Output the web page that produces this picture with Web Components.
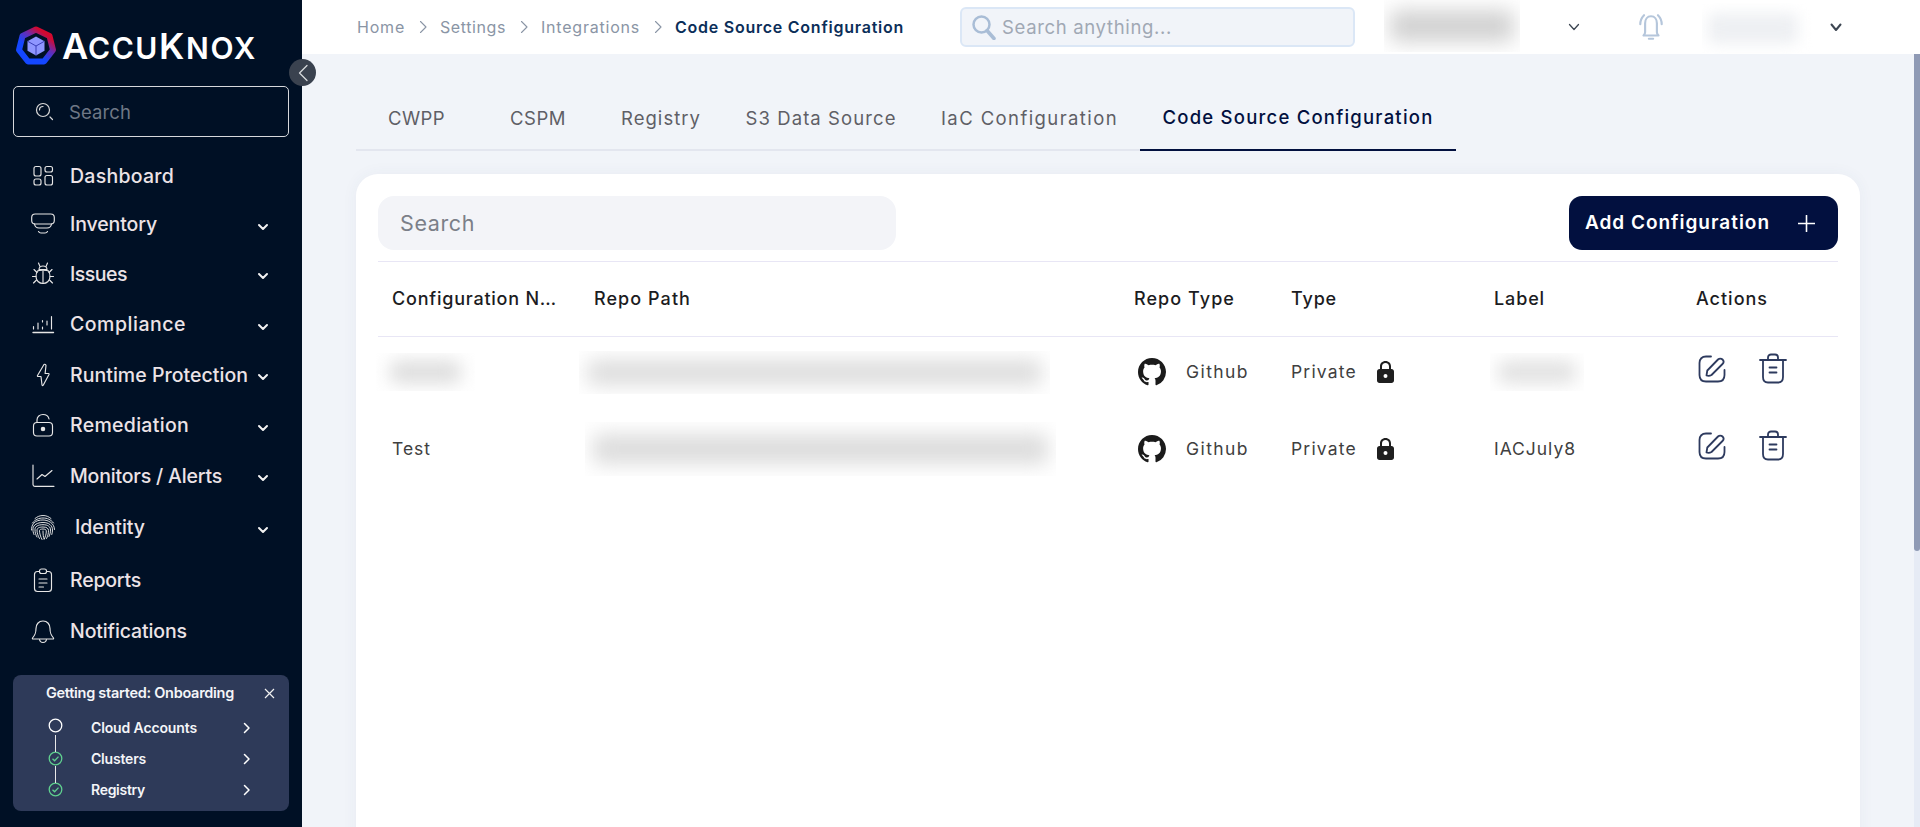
<!DOCTYPE html>
<html lang="en"><head><meta charset="utf-8"><title>Code Source Configuration</title>
<style>
html,body{margin:0;height:827px;overflow:hidden;background:#f1f4f9;font-family:Inter,"Liberation Sans",sans-serif}
</style></head><body>
<app-shell></app-shell>
<script>
const css=s=>`<style>${s}</style>`;
function def(name,render,attrs){customElements.define(name,class extends HTMLElement{
  connectedCallback(){ if(this.shadowRoot) return; this.attachShadow({mode:'open'}).innerHTML=render(this); }
});}
/* text whose tracking is tuned to a width */
customElements.define('fit-t',class extends HTMLElement{
  connectedCallback(){
    if(!this.shadowRoot){this.attachShadow({mode:'open'}).innerHTML='<style>:host{display:inline-block;white-space:nowrap}</style><slot></slot>';}
    queueMicrotask(()=>this.fit());
  }
  fit(){const w=+this.getAttribute('w');if(!w)return;
    this.style.letterSpacing='0px';
    const m=this.getBoundingClientRect().width;const n=this.textContent.length;
    if(m>0)this.style.letterSpacing=((w-m)/n).toFixed(3)+'px';}
});
const svg=(w,h,vb,body,extra='')=>`<svg width="${w}" height="${h}" viewBox="${vb}" fill="none" stroke="currentColor" stroke-linecap="round" stroke-linejoin="round" ${extra}>${body}</svg>`;
const ICONS={
dash:svg(24,24,'0 0 24 24','<rect x="3" y="2.500" width="7" height="9.500" rx="2"/><rect x="14" y="2.500" width="7.500" height="5.500" rx="2"/><rect x="3" y="15" width="7" height="6" rx="2"/><rect x="14" y="11.500" width="7.500" height="9.500" rx="2"/>'),
inv:svg(24,24,'0 0 24 24','<rect x="0.700" y="2" width="22.600" height="10" rx="3.500"/><path d="M3.500 12c.5 3 2.500 4 4.500 4h8c2 0 4-1 4.500-4M7.500 19.500c.5 1 1.500 1.500 2.500 1.500h4c1 0 2-.5 2.500-1.500"/>'),
bug:svg(24,24,'0 0 24 24','<path d="M8 7.500c0-2 1.800-3.500 4-3.500s4 1.500 4 3.500z"/><path d="M6.500 9c-1 1.500-1.500 3.500-1.500 5.500 0 4 3 7 7 7s7-3 7-7c0-2-.5-4-1.500-5.500-1-1-10-1-11 0z"/><path d="M12 9v12.500M5 14.500H1.500M19 14.500h3.500M5.500 18l-3 3M18.500 18l3 3M6 10.500 3 7.500M18 10.500l3-3M9 4.500 7.500 1M15 4.500 16.500 1"/>'),
comp:svg(24,24,'0 0 24 24','<path d="M2 20.500h20.500" stroke-width="1.400"/><path d="M2.500 17v-2.500M7 17v-6M11.500 17v-2M11.500 10V8.500M16 13V9M20.500 17V4.500"/>'),
bolt:svg(24,24,'0 0 24 24','<path d="M13 1.500 6.500 12.500c-.3.6 0 1 .6 1h2.900L11 22c.1.800.8.800 1.200.2L18 11.500c.3-.6 0-1-.6-1h-3.300L15 2.500c.1-.8-1.200-1.700-2-1z"/>'),
lock:svg(24,24,'0 0 24 24','<rect x="2.500" y="9.500" width="19" height="13.500" rx="3.500"/><path d="M6 9.500V7c0-3.300 2.700-5.500 6-5.500s5.500 2 6 4.500"/><circle cx="12" cy="16" r="1.700" fill="currentColor"/>'),
mon:svg(24,24,'0 0 24 24','<path d="M2 1v19.500c0 1 .8 1.800 1.800 1.800H23"/><path d="M6 15l5-4.500 3 2 7-6"/>'),
finger:svg(28,28,'0 0 28 28','<path d="M6 5.500C8.500 3.500 11 2.500 14 2.500s5.500 1 8 3M3.500 10C6 6.500 10 5 14 5s8 1.500 10.500 5M2.500 17c0-2.500.5-4.500 2-6.500C7 7.500 10.500 7 14 7c5 0 11.500 3 11.500 9.500M5 21.500c-.8-2-1.200-3.500-1-6C4.500 12 8 9.500 14 9.500c6 0 9.500 3 9.500 7.500 0 1.500-.2 3-.7 4.500M8 24c-1.500-2.500-2-5-2-7.500 0-3 3-4.800 8-4.800s7.500 2 7.500 5.300c0 2.500-.5 4.500-1.500 6.500M10.500 25.500c-1.500-2.500-2.500-5.500-2.500-8.500 0-2 2.500-3 6-3s5.500 1.300 5.500 3.500c0 3-.6 5.500-2 8M13 26.500c-1.500-3-2.500-6-2.500-9 0-1 1.500-1.500 3.500-1.500s3.300.7 3.300 2c0 3-.8 5.500-2 8M14 18c0 3 .3 6 1 8"/>','style="stroke-width:.95"'),
rep:svg(24,24,'0 0 24 24','<rect x="3.500" y="3.500" width="17" height="20" rx="3"/><rect x="8.500" y="1" width="7" height="4.500" rx="2" fill="#001025"/><path d="M8 11h8M8 15h8M8 19h4.500"/>'),
bell:svg(24,24,'0 0 24 24','<path d="M12 2c-4.500 0-7 3.500-7 7.500 0 5-1 6.500-3.500 9.500c-.3.500 0 1 .5 1h20c.5 0 .8-.5.5-1-2.500-3-3.500-4.500-3.500-9.500C19 5.500 16.500 2 12 2z"/><path d="M8.500 20.500c.3 2 1.700 3 3.500 3s3.200-1 3.500-3"/>')
};
def('nav-item',h=>{const ic=h.getAttribute('icon'),lb=h.getAttribute('label'),hh=h.getAttribute('h')||51,w=h.getAttribute('w'),gap=h.getAttribute('gap')||15;
 return css(`:host{display:flex;align-items:center;height:${hh}px;padding-left:31px;box-sizing:border-box;color:#ece3e7;font:500 19.500px/24px Inter,sans-serif;position:relative}
 .i{flex:none;width:24px;height:24px;display:flex;align-items:center;justify-content:center;color:#e6e6e6}
 .i svg{stroke-width:1.150;overflow:visible}.l{margin-left:${gap}px;flex:1}
 .c{margin-right:33px;width:12px;height:8px;color:#f2f2f2;margin-top:5px}`)+
 `<span class="i">${ICONS[ic]}</span><span class="l"><fit-t w="${w}">${lb}</fit-t></span>`+
 (h.hasAttribute('sub')?`<svg class="c" viewBox="0 0 12 8" fill="none" stroke="currentColor" stroke-width="2" stroke-linecap="round" stroke-linejoin="round"><path d="M2 2l4 4 4-4"/></svg>`:'');});

def('brand-logo',()=>css(`:host{display:flex;align-items:center;height:72px;padding:19px 0 0 15px;box-sizing:border-box;color:#fff;font:600 36px/1 Inter,sans-serif}
 svg{flex:none;display:block}.t{margin-left:5px;display:flex;align-items:baseline;height:28px;line-height:28px}`)+
 `<svg width="42" height="42" viewBox="0 0 42 42"><defs><linearGradient id="r" x1="0.1" y1="1" x2="0.9" y2="0"><stop offset="0.35" stop-color="#1447ff"/><stop offset="0.62" stop-color="#6b2bb0"/><stop offset="0.85" stop-color="#d3092f"/></linearGradient></defs>
 <path d="M21 4.500 34.500 11 38 25 29 36.500H13L4 25 7.500 11z" fill="none" stroke="url(#r)" stroke-width="6" stroke-linejoin="round"/>
 <path d="M21 11.500l8.500 4.700v9.600L21 30.500l-8.500-4.700v-9.600z" fill="#8f96ff"/><path d="M12.500 16.200 21 21l8.500-4.800M21 21v9.500" stroke="#3b3fb8" stroke-width="1" fill="none"/></svg>
 <span class="t"><fit-t w="26">A</fit-t><fit-t w="71" style="font-size:30px">CCU</fit-t><fit-t w="27">K</fit-t><fit-t w="71" style="font-size:30px">NOX</fit-t></span>`);

def('side-search',()=>css(`:host{display:flex;align-items:center;margin:14px 13px 0;height:51px;box-sizing:border-box;border:1px solid #d6d8dc;border-radius:5px;padding-left:21px;color:#6f7886;font:400 18.500px/24px Inter,sans-serif}
 svg{color:#d9d9d9;margin-right:15px}`)+
 svg(19,19,'0 0 19 19','<circle cx="8" cy="8" r="6.500" stroke-width="1.200"/><path d="M4.500 8c0-2 1.500-3.500 3.500-3.500M15 15l2.500 2.500" stroke-width="1.200"/>')+`<fit-t w="62">Search</fit-t>`);

def('onboard-card',()=>css(`:host{display:block;margin:0 13px;height:136px;background:#2e3a59;border-radius:8px;color:#f4f5f8;font:600 14px/18px Inter,sans-serif;padding:9px 0 0;box-sizing:border-box}
 .h{display:flex;align-items:center;height:18px;padding-left:33px}.h fit-t{flex:none}
 .x{margin-left:30px;color:#f1f1f1}
 .r{display:flex;align-items:center;height:31px;position:relative}
 .g{width:16px;margin-left:34px;flex:none;display:flex;justify-content:center}
 .n{margin-left:28px;flex:none;width:152px}
 .l{position:absolute;left:41.500px;width:1.500px;background:#e8e8e8;top:-8px;height:17px}`)+
 `<div class="h"><fit-t w="188" style="font-size:14.500px">Getting started: Onboarding</fit-t><svg class="x" width="11" height="11" viewBox="0 0 11 11" fill="none" stroke="currentColor" stroke-width="1.200"><path d="M1 1l9 9M10 1l-9 9"/></svg></div>
 ${[['Cloud Accounts',106,0],['Clusters',55,1],['Registry',54,1]].map(([t,w,ok],i)=>`<div class="r" style="${i==0?'margin-top:10px':''}">${i?'<span class="l"></span>':''}<span class="g">${ok?
   `<svg width="15" height="15" viewBox="0 0 15 15" fill="none" stroke="#5fd08f" stroke-width="1.300"><circle cx="7.500" cy="7.500" r="6.300"/><path d="M4.500 7.700l2.100 2.100 3.900-4.200"/></svg>`:
   `<svg width="15" height="15" viewBox="0 0 15 15" fill="none" stroke="#fff" stroke-width="1.300" style="margin-top:-4px"><circle cx="7.500" cy="7.500" r="6.300"/></svg>`}</span>
   <span class="n"><fit-t w="${w}">${t}</fit-t></span>
   <svg width="8" height="12" viewBox="0 0 8 12" fill="none" stroke="#fff" stroke-width="1.500" stroke-linecap="round" stroke-linejoin="round"><path d="M1.500 1.500 6 6l-4.500 4.500"/></svg></div>`).join('')}`);

def('side-bar',()=>css(`:host{display:block;flex:none;width:302px;height:827px;background:#001025;position:relative;overflow:visible;z-index:2}
 nav{margin-top:14px;display:block}
 onboard-card{margin-top:20px}
 .tog{position:absolute;left:289px;top:59px;width:27px;height:27px;border-radius:50%;background:#3a424f;display:flex;align-items:center;justify-content:center;color:#d6d8dc}`)+
 `<brand-logo></brand-logo><side-search></side-search><nav>
 <nav-item icon="dash" label="Dashboard" w="104" h="49"></nav-item>
 <nav-item icon="inv" label="Inventory" w="87" h="48" sub></nav-item>
 <nav-item icon="bug" label="Issues" w="57" h="51" sub></nav-item>
 <nav-item icon="comp" label="Compliance" w="116" h="50" sub></nav-item>
 <nav-item icon="bolt" label="Runtime Protection" w="178" h="51" sub></nav-item>
 <nav-item icon="lock" label="Remediation" w="119" h="50" sub></nav-item>
 <nav-item icon="mon" label="Monitors / Alerts" w="152" h="51" sub></nav-item>
 <nav-item icon="finger" label="Identity" w="70" h="52" gap="20" sub></nav-item>
 <nav-item icon="rep" label="Reports" w="71" h="53"></nav-item>
 <nav-item icon="bell" label="Notifications" w="117" h="49"></nav-item>
 </nav><onboard-card></onboard-card>
 <div class="tog">${svg(12,18,'0 0 12 18','<path d="M10 1.500 2.500 9l7.500 7.500" stroke-width="1.300"/>')}</div>`);

def('blur-box',h=>{const w=h.getAttribute('w'),ht=h.getAttribute('ht'),c=h.getAttribute('c')||'#dcdcdc',b=h.getAttribute('b')||9,p=h.getAttribute('p')||'8px 8px';
 return css(`:host{display:block;width:${w}px;height:${ht}px;overflow:hidden;padding:${p};box-sizing:border-box;flex:none}
 i{display:block;height:100%;width:100%;background:${c};filter:blur(${b}px);border-radius:6px}`)+`<i></i>`;});

def('bread-crumbs',()=>{const ch=svg(9,14,'0 0 9 14','<path d="M1.500 1.500 7 7l-5.500 5.500" stroke-width="1.100"/>','style="color:#8a95a5;margin:0 12px 0 14px;flex:none"');
 return css(`:host{display:flex;align-items:center;width:603px;margin-left:55px;flex:none;font:400 16px/20px Inter,sans-serif;color:#8a95a5}
 b{font-weight:600;color:#0b2e59}`)+`<fit-t w="48">Home</fit-t>${ch}<fit-t w="66">Settings</fit-t>${ch}<fit-t w="99">Integrations</fit-t>${ch}<b><fit-t w="229">Code Source Configuration</fit-t></b>`;});

def('top-search',()=>css(`:host{display:flex;align-items:center;flex:none;width:395px;height:40px;box-sizing:border-box;background:#f1f4f9;border:2px solid #dbe7f6;border-radius:6px;padding-left:9px;font:400 18.500px/24px Inter,sans-serif;color:#a0a8b4}
 svg{color:#a9bdd6;margin-right:6px;flex:none}`)+svg(25,26,'0 0 25 26','<circle cx="10.500" cy="10.500" r="8" stroke-width="2.500"/><path d="M16 16.500l7 8" stroke-width="3.500"/>')+`<fit-t w="170">Search anything...</fit-t>`);

def('top-bar',()=>css(`:host{display:flex;align-items:center;flex:none;height:54px;background:#fff}
 .v{margin-left:48px;color:#3d4652;flex:none}.bell{margin-left:56px;color:#b5c6db;flex:none}`)+
 `<bread-crumbs></bread-crumbs><top-search></top-search>
 <blur-box w="136" ht="52" c="#d2d2d2" b="10" p="10px 6px" style="margin:0 0 2px 29px"></blur-box>
 ${svg(12,8,'0 0 12 8','<path d="M1.500 1.500 6 6.500l4.500-5" stroke-width="1.300"/>','class="v"')}
 ${svg(30,29,'0 0 28 27','<path d="M14 3c-3.500 0-5.500 3-5.500 6.500v8.500c0 1.500-.8 2.300-1.500 3h14c-.7-.7-1.500-1.500-1.500-3V9.500C19.500 6 17.500 3 14 3z" stroke-width="2"/><path d="M4 10.500C4 7 5.500 4 7.500 2M24 10.500C24 7 22.500 4 20.500 2M12 24h4" stroke-width="2"/>','class="bell"')}
 <blur-box w="126" ht="51" c="#eef0f3" b="7" p="10px 30px 10px 6px" style="margin:3px 0 0 36px"></blur-box>
 ${svg(12,9,'0 0 12 9','<path d="M1.500 1.500 6 7l4.500-5.500" stroke-width="2"/>','style="margin-left:2px;color:#3d4652;flex:none"')}`);

def('tab-bar',()=>{const tabs=[['CWPP',57,121],['CSPM',56,122],['Registry',80,124],['S3 Data Source',151,196],['IaC Configuration',177,221],['Code Source Configuration',271,316]];
 return css(`:host{display:flex;margin-top:37px;height:60px;border-bottom:2px solid #e3e6ef;width:1100px;box-sizing:border-box;font:400 18.500px/24px Inter,sans-serif;color:#5f5f66}
 div{display:flex;justify-content:center;align-items:center;height:60px;padding-bottom:6px;box-sizing:border-box;flex:none}
 .a{color:#02103f;font-weight:500;border-bottom:2px solid #02103f}`)+
 tabs.map(([t,w,b],i)=>`<div style="width:${b}px" class="${i==5?'a':''}"><fit-t w="${w}">${t}</fit-t></div>`).join('');});

const COLS='202px 540px 157px 203px 202px 156px';
const gh=`M8 0C3.58 0 0 3.58 0 8c0 3.54 2.29 6.53 5.47 7.59.4.07.55-.17.55-.38 0-.19-.01-.82-.01-1.49-2.01.37-2.53-.49-2.69-.94-.09-.23-.48-.94-.82-1.13-.28-.15-.68-.52-.01-.53.63-.01 1.08.58 1.23.82.72 1.21 1.87.87 2.33.66.07-.52.28-.87.51-1.07-1.78-.2-3.64-.89-3.64-3.95 0-.87.31-1.59.82-2.15-.08-.2-.36-1.02.08-2.12 0 0 .67-.21 2.2.82.64-.18 1.32-.27 2-.27.68 0 1.36.09 2 .27 1.53-1.04 2.2-.82 2.2-.82.44 1.1.16 1.92.08 2.12.51.56.82 1.27.82 2.15 0 3.07-1.87 3.75-3.65 3.95.29.25.54.73.54 1.48 0 1.07-.01 1.93-.01 2.2 0 .21.15.46.55.38A8.013 8.013 0 0016 8c0-4.42-3.58-8-8-8z`;
const editI=svg(28,28,'0 0 28 28','<path d="M13 1.500H8C4 1.500 1.500 4 1.500 8v12c0 4 2.500 6.500 6.500 6.500h12c4 0 6.500-2.500 6.500-6.500v-5" stroke-width="1.800"/><path d="M8.500 20.500l.8-5L20 4.500c1.300-1.300 3.200-1.300 4.500 0s1.300 3.200 0 4.500L13.500 20c-1.300.8-3.300 1.200-5 .5z" stroke-width="1.800"/>');
const trashI=svg(28,31,'0 0 28 31','<path d="M1 7h26" stroke-width="1.800"/><path d="M9 7V4.500C9 2.500 10.500 1.500 12 1.500h4c1.500 0 3 1 3 3V7" stroke-width="1.800"/><path d="M4 7v17c0 3.500 2 5.500 5 5.500h10c3 0 5-2 5-5.500V7" stroke-width="1.800"/><path d="M10.500 14.500h7M10.500 19.500h7" stroke-width="1.800"/>');
const lockI=`<svg width="17" height="22" viewBox="0 0 17 22" style="display:block"><path fill="#1f1f1f" fill-rule="evenodd" d="M8.500 0C5.200 0 3 2.300 3 5.500V8H2.500C1.100 8 0 9.100 0 10.500v9C0 20.900 1.100 22 2.500 22h12c1.400 0 2.500-1.100 2.500-2.500v-9C17 9.100 15.900 8 14.500 8H14V5.500C14 2.300 11.800 0 8.500 0zM5 8V5.500C5 3.400 6.400 2 8.500 2S12 3.400 12 5.500V8zM8.500 13a2 2 0 1 1 0 4 2 2 0 0 1 0-4z"/></svg>`;
def('config-row',h=>{const blurName=h.hasAttribute('blurred');
 const nm=blurName?`<blur-box w="99" ht="38" p="8px 14px" style="margin-left:-16px"></blur-box>`:`<fit-t w="39">Test</fit-t>`;
 const lab=blurName?`<blur-box w="94" ht="38" c="#e0e0e0" style="margin-left:-4px"></blur-box>`:`<fit-t w="82">IACJuly8</fit-t>`;
 const ml=blurName?-15:-9, ph=blurName?43:54;
 return css(`:host{display:grid;grid-template-columns:${COLS};height:77px;padding-bottom:7px;box-sizing:border-box;align-items:center;font:400 17.500px/24px Inter,sans-serif;color:#404040}
 .c{padding-left:14px;display:flex;align-items:center}.gh{margin-right:20px;flex:none}.lk{margin-left:20px;flex:none}
 .act{color:#2d3a5e;gap:33px;margin-top:-6px;padding-left:16px;align-items:flex-start}.act svg{flex:none}.act svg+svg{margin-top:-2px}`)+
 `<div class="c">${nm}</div><div class="c"><blur-box w="471" ht="${ph}" b="10" p="${blurName?'9px 8px':'12px 8px'}" style="margin-left:${ml}px"></blur-box></div>
 <div class="c" style="padding-left:18px"><svg class="gh" width="28" height="28" viewBox="0 0 16 16"><path fill="#1b1b1b" d="${gh}"/></svg><fit-t w="63">Github</fit-t></div>
 <div class="c"><fit-t w="66">Private</fit-t><span class="lk">${lockI}</span></div>
 <div class="c">${lab}</div><div class="c act">${editI}${trashI}</div>`;});

def('config-table',()=>css(`:host{display:block;margin-top:11px;border-top:1px solid #e8e6f5}
 .h{display:grid;grid-template-columns:${COLS};height:74px;align-items:center;border-bottom:1px solid #e8e6f5;font:500 18px/24px Inter,sans-serif;color:#1c1c22}
 .h span{padding-left:14px;white-space:nowrap}`)+
 `<div class="h"><span><fit-t w="165">Configuration N…</fit-t></span><span><fit-t w="97">Repo Path</fit-t></span><span><fit-t w="101">Repo Type</fit-t></span><span><fit-t w="46">Type</fit-t></span><span><fit-t w="51">Label</fit-t></span><span><fit-t w="72">Actions</fit-t></span></div>
 <config-row blurred></config-row><config-row></config-row>`);

def('config-card',()=>css(`:host{display:block;margin-top:23px;width:1504px;height:720px;background:#fff;border-radius:22px;box-sizing:border-box;padding:22px 22px 0;box-shadow:0 0 16px rgba(60,70,120,.05)}
 .t{display:flex;justify-content:space-between}
 .s{width:518px;height:54px;border-radius:16px;background:#f3f4f8;display:flex;align-items:center;padding-left:22px;box-sizing:border-box;color:#7b7f88;font:400 21.500px/24px Inter,sans-serif}
 .b{width:269px;height:54px;border-radius:13px;background:#02103f;color:#fff;display:flex;align-items:center;padding-left:16px;box-sizing:border-box;font:600 19px/24px Inter,sans-serif}`)+
 `<div class="t"><div class="s"><fit-t w="75">Search</fit-t></div><div class="b"><fit-t w="185">Add Configuration</fit-t>${svg(17,17,'0 0 16 16','<path d="M8 .5v15M.5 8h15" stroke-width="1.500"/>','style="margin-left:28px"')}</div></div>
 <config-table></config-table>`);

def('app-shell',()=>css(`:host{display:flex;width:1920px;height:827px;overflow:hidden;position:relative}
 main{flex:1;min-width:0;display:flex;flex-direction:column;height:827px}
 .p{padding-left:54px;flex:1;position:relative;overflow:hidden;min-height:0}
 .tr{position:absolute;right:0;top:0;bottom:0;width:6px;background:#e6ebf5}
 .sb{position:absolute;right:0;top:0;width:6px;height:497px;background:#8f9ab5;border-radius:0 0 3px 3px}`)+
 `<side-bar></side-bar><main><top-bar></top-bar><div class="p"><tab-bar></tab-bar><config-card></config-card><div class="tr"></div><div class="sb"></div></div></main>`);
</script></body></html>
